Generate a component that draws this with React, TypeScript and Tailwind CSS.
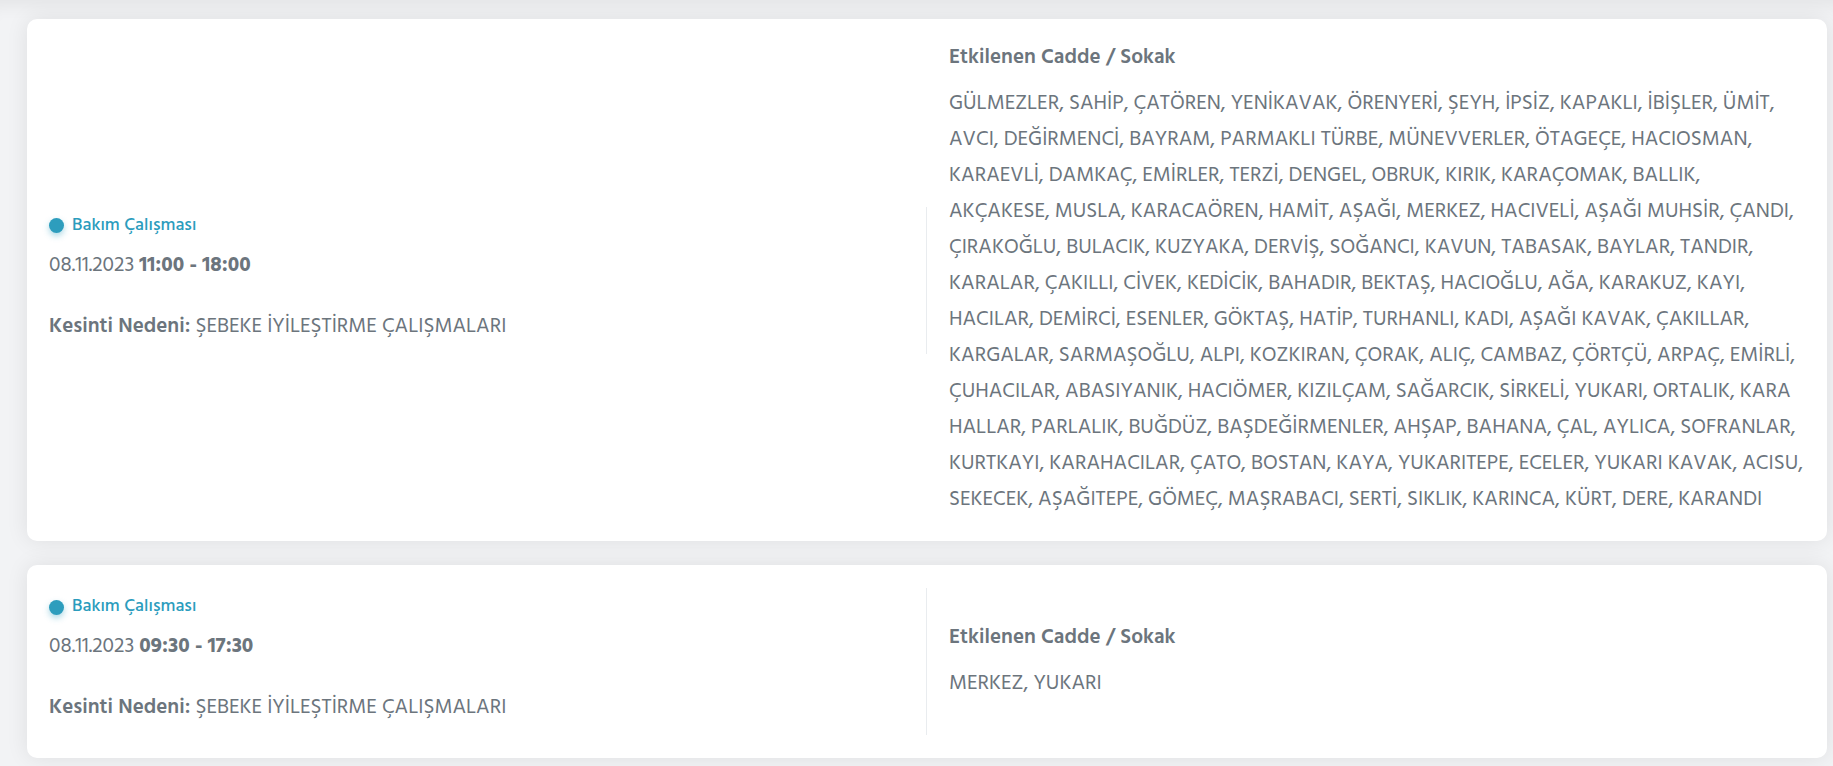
import React from "react";

type Outage = {
  type: string;
  date: string;
  time: string;
  reason: string;
  streets: string[];
};

const outages: Outage[] = [
  {
    type: "Bakım Çalışması",
    date: "08.11.2023",
    time: "11:00 - 18:00",
    reason: "ŞEBEKE İYİLEŞTİRME ÇALIŞMALARI",
    streets: [
      "GÜLMEZLER, SAHİP, ÇATÖREN, YENİKAVAK, ÖRENYERİ, ŞEYH, İPSİZ, KAPAKLI, İBİŞLER, ÜMİT,",
      "AVCI, DEĞİRMENCİ, BAYRAM, PARMAKLI TÜRBE, MÜNEVVERLER, ÖTAGEÇE, HACIOSMAN,",
      "KARAEVLİ, DAMKAÇ, EMİRLER, TERZİ, DENGEL, OBRUK, KIRIK, KARAÇOMAK, BALLIK,",
      "AKÇAKESE, MUSLA, KARACAÖREN, HAMİT, AŞAĞI, MERKEZ, HACIVELİ, AŞAĞI MUHSİR, ÇANDI,",
      "ÇIRAKOĞLU, BULACIK, KUZYAKA, DERVİŞ, SOĞANCI, KAVUN, TABASAK, BAYLAR, TANDIR,",
      "KARALAR, ÇAKILLI, CİVEK, KEDİCİK, BAHADIR, BEKTAŞ, HACIOĞLU, AĞA, KARAKUZ, KAYI,",
      "HACILAR, DEMİRCİ, ESENLER, GÖKTAŞ, HATİP, TURHANLI, KADI, AŞAĞI KAVAK, ÇAKILLAR,",
      "KARGALAR, SARMAŞOĞLU, ALPI, KOZKIRAN, ÇORAK, ALIÇ, CAMBAZ, ÇÖRTÇÜ, ARPAÇ, EMİRLİ,",
      "ÇUHACILAR, ABASIYANIK, HACIÖMER, KIZILÇAM, SAĞARCIK, SİRKELİ, YUKARI, ORTALIK, KARA",
      "HALLAR, PARLALIK, BUĞDÜZ, BAŞDEĞİRMENLER, AHŞAP, BAHANA, ÇAL, AYLICA, SOFRANLAR,",
      "KURTKAYI, KARAHACILAR, ÇATO, BOSTAN, KAYA, YUKARITEPE, ECELER, YUKARI KAVAK, ACISU,",
      "SEKECEK, AŞAĞITEPE, GÖMEÇ, MAŞRABACI, SERTİ, SIKLIK, KARINCA, KÜRT, DERE, KARANDI",
    ],
  },
  {
    type: "Bakım Çalışması",
    date: "08.11.2023",
    time: "09:30 - 17:30",
    reason: "ŞEBEKE İYİLEŞTİRME ÇALIŞMALARI",
    streets: ["MERKEZ, YUKARI"],
  },
];

function OutageCard({ o }: { o: Outage }) {
  return (
    <div className="flex items-center rounded-[10px] bg-white py-[23px] shadow-[0_0_22px_rgba(0,0,0,0.085)]">
      <div className="basis-1/2 shrink-0 self-center border-r border-[#e9ecef] px-[22px] pt-[7px] pb-[11px]">
        <div className="flex h-[24px] items-center gap-[8px]">
          <span className="h-[15px] w-[15px] shrink-0 rounded-full bg-[#2d9dbd] shadow-[0_3px_6px_rgba(45,157,189,0.4)]" />
          <span className="text-[18px] font-medium leading-[24px] text-[#2b9cbd]">{o.type}</span>
        </div>
        <div className="mt-3 text-[21px] leading-[32px] text-[#6c757d]">
          {o.date} <span className="font-bold">{o.time}</span>
        </div>
        <div className="mt-[29px] text-[21px] leading-[32px] text-[#6c757d]">
          <span className="font-semibold">Kesinti Nedeni:</span> {o.reason}
        </div>
      </div>
      <div className="basis-1/2 shrink-0 pl-[22px] pr-[12px]">
        <div className="text-[21px] font-semibold leading-[32px] text-[#6c757d]">Etkilenen Cadde / Sokak</div>
        <div className="mt-3 text-[21px] leading-[36px] text-[#6c757d] whitespace-nowrap">
          {o.streets.map((line, i) => (
            <React.Fragment key={i}>
              {i > 0 && <br />}
              {line}
            </React.Fragment>
          ))}
        </div>
      </div>
    </div>
  );
}

export default function App() {
  return (
    <div className="min-h-screen bg-[#f2f3f5] pt-[19px] pl-[27px] pr-[6px] font-[Hind,'Open_Sans',sans-serif] shadow-[inset_0_18px_16px_-12px_rgba(0,0,0,0.06)]">
      <div className="flex flex-col gap-6">
        {outages.map((o, i) => (
          <OutageCard key={i} o={o} />
        ))}
      </div>
    </div>
  );
}
